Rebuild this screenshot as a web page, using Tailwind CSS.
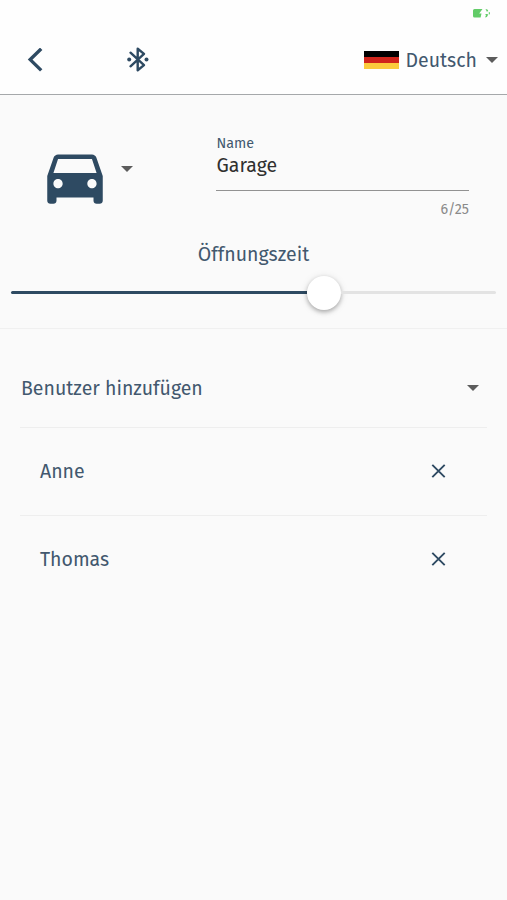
<!DOCTYPE html>
<html lang="de">
<head>
    <meta charset="UTF-8">
    <meta name="viewport" content="width=device-width, initial-scale=1.0">
    <title>Garage</title>
    <script src="https://cdn.jsdelivr.net/npm/@tailwindcss/browser@4"></script>
</head>
<body class="bg-[#fafafa] text-[#42586e] font-['Fira_Sans','Noto_Sans',sans-serif] text-[19.5px] leading-6 h-[900px] overflow-hidden">
    <header class="h-[95px] bg-[#fefefe] border-b border-[#a5a8aa]">
        <!-- Status bar -->
        <div class="h-[26px] flex justify-end pr-[17px] pt-[9px]">
            <svg class="w-[17px] h-[9px]" viewBox="0 0 17 9" fill="#62cc68">
                <path d="M1.5 0H9.5L6.2 4.6h2.3L7.6 8.6H1.5Q0 8.6 0 7.1V1.5Q0 0 1.5 0z"/>
                <path d="M12.5 0q2.3 0 2.7 1.5l-1.2 1.6zM12 5h2.8v1.6q-.5 2-2.7 2L13 6zM15.8 2.8q1.2.2 1.2 1.5t-1.2 1.5z"/>
            </svg>
        </div>

        <!-- Toolbar -->
        <div class="h-[68px] flex items-center pl-[27px] pr-[9px]">
            <svg class="w-4 h-6" viewBox="0 0 16 24" fill="none" stroke="#2e4a62" stroke-width="3.4">
                <path d="M14.2 .8L3.2 11.6l11 10.8"/>
            </svg>
            <svg class="w-[22px] h-[26px] ml-[84px]" viewBox="0 0 22 26" fill="none" stroke="#2e4a62" stroke-width="2.4" stroke-linecap="round" stroke-linejoin="round">
                <path d="M3.5 5.7L17 18.1l-6.3 5.2V1.7L17 6.9 3.5 19.3"/>
                <circle cx="2.2" cy="12.5" r="2" fill="#2e4a62" stroke="none"/>
                <circle cx="19.5" cy="12.5" r="2" fill="#2e4a62" stroke="none"/>
            </svg>
            <div class="ml-auto flex items-center">
                <div class="w-[35px] h-[18px] flex flex-col mr-[6.5px] mb-px">
                    <div class="flex-1 bg-black"></div>
                    <div class="flex-1 bg-[#d0241b]"></div>
                    <div class="flex-1 bg-[#fbcb3c]"></div>
                </div>
                <span class="w-[71.5px] pt-px whitespace-nowrap">Deutsch</span>
                <svg class="w-3 h-[6px] ml-[9px]" viewBox="0 0 12 6" fill="#5c5c5c"><path d="M0 0h12L6 6z"/></svg>
            </div>
        </div>
    </header>

    <!-- Door settings -->
    <section class="h-[234px] border-b border-[#f0f0f0]">
        <div class="h-[147px] flex">
            <svg class="w-[74px] h-[74px] ml-[38px] mt-[44px]" viewBox="0 0 24 24" fill="#2e4a62">
                <path d="M18.92 6.01C18.72 5.42 18.16 5 17.5 5h-11c-.66 0-1.21.42-1.42 1.01L3 12v8c0 .55.45 1 1 1h1c.55 0 1-.45 1-1v-1h12v1c0 .55.45 1 1 1h1c.55 0 1-.45 1-1v-8l-2.08-5.99zM6.5 16c-.83 0-1.5-.67-1.5-1.5S5.67 13 6.5 13s1.5.67 1.5 1.5S7.33 16 6.5 16zm11 0c-.83 0-1.5-.67-1.5-1.5s.67-1.5 1.5-1.5 1.5.67 1.5 1.5-.67 1.5-1.5 1.5zM5 11l1.5-4.5h11L19 11H5z"/>
            </svg>
            <svg class="w-3 h-[6px] ml-[9px] mt-[71px]" viewBox="0 0 12 6" fill="#5c5c5c"><path d="M0 0h12L6 6z"/></svg>
            <div class="w-[253px] ml-[83px] pt-[41px]">
                <div class="pl-[0.5px] text-[14.3px] leading-4">Name</div>
                <div class="h-[39px] pl-[0.5px] border-b border-[#929292] text-[#303030] leading-[28px]">Garage</div>
                <div class="text-right text-[14.3px] leading-4 mt-[11px] text-[#8a8a8a]">6/25</div>
            </div>
        </div>
        <div class="pt-px text-center">Öffnungszeit</div>
        <div class="flex items-center h-[34px] mx-[11px] mt-[8.5px]">
            <div class="w-[296px] h-[3px] rounded-l-full bg-[#2e4a62]"></div>
            <div class="w-[34px] h-[34px] rounded-full bg-white shadow-[0_2px_4px_rgba(0,0,0,0.28),0_1px_8px_rgba(0,0,0,0.1)]"></div>
            <div class="flex-1 h-[3px] rounded-r-full bg-[#e3e3e3]"></div>
        </div>
    </section>

    <!-- Users -->
    <section class="mx-5">
        <div class="h-[99px] flex items-center pt-5 pl-px pr-[9px] border-b border-[#eeeeee]">
            <span class="pt-[2px]">Benutzer hinzufügen</span>
            <svg class="w-3 h-[6px] ml-auto -mr-px" viewBox="0 0 12 6" fill="#5c5c5c"><path d="M0 0h12L6 6z"/></svg>
        </div>
        <div class="h-[88px] flex items-center pl-5 pr-[41px] pb-px border-b border-[#eeeeee]">
            <span class="pt-[2px]">Anne</span>
            <svg class="w-[15px] h-[14px] ml-auto" viewBox="0 0 15 14" fill="none" stroke="#2e4a62" stroke-width="1.9"><path d="M1.3.8l12.4 12.4M13.7.8L1.3 13.2"/></svg>
        </div>
        <div class="h-[88px] flex items-center pl-5 pr-[41px] pb-[2px]">
            <span class="pt-[2px]">Thomas</span>
            <svg class="w-[15px] h-[14px] ml-auto" viewBox="0 0 15 14" fill="none" stroke="#2e4a62" stroke-width="1.9"><path d="M1.3.8l12.4 12.4M13.7.8L1.3 13.2"/></svg>
        </div>
    </section>
</body>
</html>
